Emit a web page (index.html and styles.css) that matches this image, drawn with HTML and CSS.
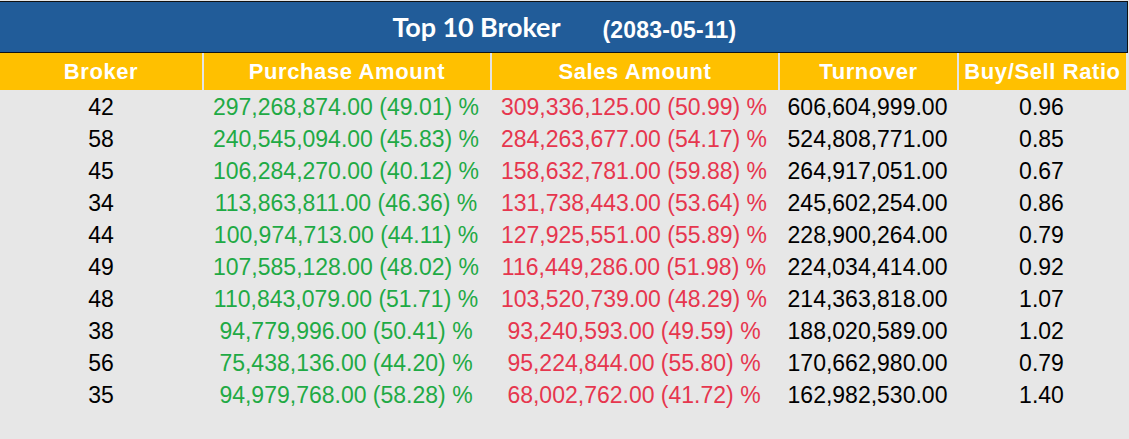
FILE: index.html
```html
<!DOCTYPE html>
<html>
<head>
<meta charset="utf-8">
<link rel="stylesheet" href="styles.css">
</head>
<body>
<div class="sheet">
  <div class="title">
    <span class="title-main">Top 10 Broker</span>
    <span class="title-date">(2083-05-11)</span>
  </div>
  <div class="table">
    <div class="row head">
      <div class="cell">Broker</div>
      <div class="cell">Purchase Amount</div>
      <div class="cell">Sales Amount</div>
      <div class="cell">Turnover</div>
      <div class="cell">Buy/Sell Ratio</div>
    </div>
    <div class="row"><div class="cell">42</div><div class="cell buy">297,268,874.00 (49.01) %</div><div class="cell sell">309,336,125.00 (50.99) %</div><div class="cell">606,604,999.00</div><div class="cell">0.96</div></div>
    <div class="row"><div class="cell">58</div><div class="cell buy">240,545,094.00 (45.83) %</div><div class="cell sell">284,263,677.00 (54.17) %</div><div class="cell">524,808,771.00</div><div class="cell">0.85</div></div>
    <div class="row"><div class="cell">45</div><div class="cell buy">106,284,270.00 (40.12) %</div><div class="cell sell">158,632,781.00 (59.88) %</div><div class="cell">264,917,051.00</div><div class="cell">0.67</div></div>
    <div class="row"><div class="cell">34</div><div class="cell buy">113,863,811.00 (46.36) %</div><div class="cell sell">131,738,443.00 (53.64) %</div><div class="cell">245,602,254.00</div><div class="cell">0.86</div></div>
    <div class="row"><div class="cell">44</div><div class="cell buy">100,974,713.00 (44.11) %</div><div class="cell sell">127,925,551.00 (55.89) %</div><div class="cell">228,900,264.00</div><div class="cell">0.79</div></div>
    <div class="row"><div class="cell">49</div><div class="cell buy">107,585,128.00 (48.02) %</div><div class="cell sell">116,449,286.00 (51.98) %</div><div class="cell">224,034,414.00</div><div class="cell">0.92</div></div>
    <div class="row"><div class="cell">48</div><div class="cell buy">110,843,079.00 (51.71) %</div><div class="cell sell">103,520,739.00 (48.29) %</div><div class="cell">214,363,818.00</div><div class="cell">1.07</div></div>
    <div class="row"><div class="cell">38</div><div class="cell buy">94,779,996.00 (50.41) %</div><div class="cell sell">93,240,593.00 (49.59) %</div><div class="cell">188,020,589.00</div><div class="cell">1.02</div></div>
    <div class="row"><div class="cell">56</div><div class="cell buy">75,438,136.00 (44.20) %</div><div class="cell sell">95,224,844.00 (55.80) %</div><div class="cell">170,662,980.00</div><div class="cell">0.79</div></div>
    <div class="row"><div class="cell">35</div><div class="cell buy">94,979,768.00 (58.28) %</div><div class="cell sell">68,002,762.00 (41.72) %</div><div class="cell">162,982,530.00</div><div class="cell">1.40</div></div>
  </div>
</div>
</body>
</html>
```

FILE: styles.css
```css
html, body {
  margin: 0;
  padding: 0;
  background: #e7e7e7;
}

.sheet {
  width: 1128px;
  padding-top: 1px;
  font-family: "Liberation Sans", Arial, sans-serif;
}

.title {
  box-sizing: border-box;
  width: 1128px;
  height: 52px;
  background: #215c99;
  border-top: 1px solid #111;
  border-bottom: 1px solid #111;
  border-right: 1px solid #111;
  color: #fff;
  display: flex;
  justify-content: center;
  align-items: baseline;
  gap: 42px;
  line-height: 50px;
  padding-left: 2px;
}

.title-main {
  font-family: Lato, "Open Sans", sans-serif;
  font-weight: 700;
  font-size: 27px;
  letter-spacing: -0.1px;
}

.title-date {
  font-family: "Liberation Sans", Arial, sans-serif;
  font-weight: 700;
  font-size: 23px;
  letter-spacing: 0.2px;
  position: relative;
  top: 1px;
}

.table {
  width: 1126px;
}

.row {
  display: grid;
  grid-template-columns: 202px 288px 288px 179px 169px;
  height: 32px;
  box-sizing: border-box;
  padding-top: 3px;
  line-height: 29px;
  font-size: 23px;
  color: #000;
}

.cell {
  text-align: center;
  white-space: nowrap;
  box-sizing: border-box;
}

.row.head {
  height: 37px;
  padding-top: 0;
  line-height: 37px;
  background: #ffc000;
  color: #fff;
  font-weight: 700;
  font-size: 22px;
  letter-spacing: 0.6px;
}

.row.head .cell + .cell {
  border-left: 2px solid #e4e4e4;
}

.buy {
  color: #1faa45;
}

.sell {
  color: #e6364e;
}
```
